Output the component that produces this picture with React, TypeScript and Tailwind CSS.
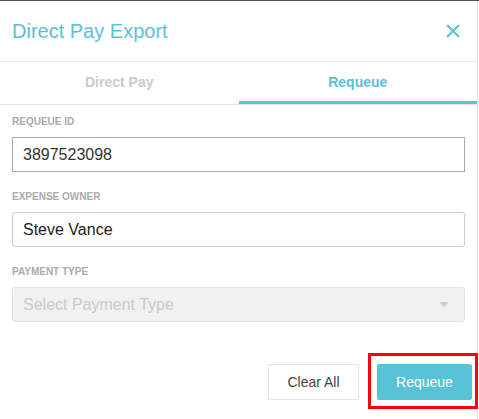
export default function App() {
  return (
    <div className="w-[479px] h-[419px] bg-white border-t border-[#4b5157] overflow-hidden font-['Liberation_Sans',Arial,sans-serif]">
      <div className="w-[478px] h-full border-r border-[#e4e4e4] flex flex-col">
        {/* header */}
        <div className="h-[61px] flex items-center justify-between pl-3 pr-[17px] border-b border-[#e5e5e5]">
          <h1 className="text-[20px] text-[#5bc1d6] leading-none">Direct Pay Export</h1>
          <button className="w-[14px] h-[14px] text-[#5bc1d6]">
            <svg viewBox="0 0 14 14" width="14" height="14" fill="none" stroke="currentColor" strokeWidth="2">
              <path d="M1 1L13 13M13 1L1 13" />
            </svg>
          </button>
        </div>

        {/* tabs */}
        <div className="flex h-[43px] border-b border-[#e5e5e5]">
          <div className="flex-1 flex items-center justify-center pb-[2px] text-[14px] font-bold text-[#cacaca]">
            Direct Pay
          </div>
          <div className="flex-1 flex items-center justify-center border-b-[3px] border-[#5bc1d6] pt-[1px] text-[14px] font-bold text-[#5bc1d6]">
            Requeue
          </div>
        </div>

        {/* form */}
        <div className="px-3 pt-[11px] flex flex-col">
          <label className="text-[10px] leading-[12px] font-bold text-[#ababab]">REQUEUE ID</label>
          <div className="mt-[9px] h-[35px] border border-[#a9a9a9] flex items-center px-[10px] text-[16px] text-[#333]">
            3897523098
          </div>

          <label className="mt-[19px] text-[10px] leading-[12px] font-bold text-[#ababab]">EXPENSE OWNER</label>
          <div className="mt-[9px] h-[35px] border border-[#cccccc] rounded-[3px] flex items-center px-[10px] text-[16px] text-[#222]">
            Steve Vance
          </div>

          <label className="mt-[19px] text-[10px] leading-[12px] font-bold text-[#ababab]">PAYMENT TYPE</label>
          <div className="mt-[9px] h-[35px] border border-[#e3e3e3] bg-[#f1f1f1] rounded-[3px] flex items-center justify-between pl-[10px] pr-[15px] text-[16px] text-[#c9c9c9]">
            <span>Select Payment Type</span>
            <svg width="10" height="5" viewBox="0 0 10 5">
              <path d="M0 0H10L5 5Z" fill="#cccccc" />
            </svg>
          </div>
        </div>

        {/* footer */}
        <div className="mt-[42px] flex justify-end gap-[18px] pr-[5px]">
          <button className="w-[91px] h-[36px] bg-white border border-[#e3e3e3] rounded-[2px] text-[14px] text-[#444]">
            Clear All
          </button>
          <div className="relative">
            <button className="w-[95px] h-[36px] bg-[#58c3d7] rounded-[2px] text-[14px] text-white">
              Requeue
            </button>
            <div className="absolute left-[-9px] top-[-11px] w-[110px] h-[56px] border-[3px] border-[#ff0000] pointer-events-none" />
          </div>
        </div>
      </div>
    </div>
  );
}
